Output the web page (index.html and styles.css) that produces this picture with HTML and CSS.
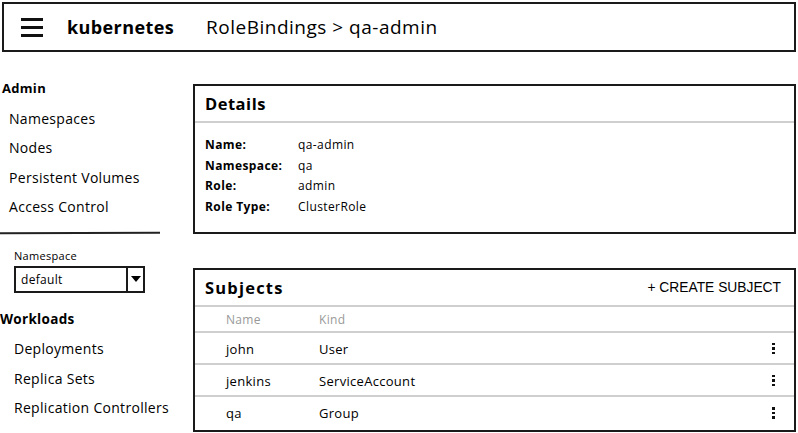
FILE: index.html
```html
<!DOCTYPE html>
<html>
<head>
<meta charset="utf-8">
<link rel="stylesheet" href="styles.css">
</head>
<body>
<header class="topbar">
  <span class="hamburger"><i></i><i></i><i></i></span>
  <span class="brand">kubernetes</span>
  <span class="crumb">RoleBindings &gt; qa-admin</span>
</header>
<div class="layout">
  <nav class="sidebar">
    <div class="group-title">Admin</div>
    <div class="nav-item">Namespaces</div>
    <div class="nav-item">Nodes</div>
    <div class="nav-item">Persistent Volumes</div>
    <div class="nav-item">Access Control</div>
    <div class="divider"></div>
    <div class="ns-label">Namespace</div>
    <div class="select">
      <span class="select-value">default</span>
      <span class="select-btn"><svg width="10" height="6" viewBox="0 0 10 6"><path d="M0 0 H10 L5 6 Z" fill="#000"/></svg></span>
    </div>
    <div class="group-title workloads">Workloads</div>
    <div class="nav-item wl">Deployments</div>
    <div class="nav-item wl">Replica Sets</div>
    <div class="nav-item wl">Replication Controllers</div>
  </nav>
  <main class="main">
    <section class="card details">
      <div class="card-head"><h2>Details</h2></div>
      <div class="detail-grid">
        <div class="dl">Name:</div><div class="dv">qa-admin</div>
        <div class="dl">Namespace:</div><div class="dv">qa</div>
        <div class="dl">Role:</div><div class="dv">admin</div>
        <div class="dl">Role Type:</div><div class="dv">ClusterRole</div>
      </div>
    </section>
    <section class="card subjects">
      <div class="card-head"><h2 class="wide">Subjects</h2><span class="create">+ CREATE SUBJECT</span></div>
      <div class="trow thead"><span class="c1">Name</span><span class="c2">Kind</span></div>
      <div class="trow"><span class="c1">john</span><span class="c2">User</span><span class="kebab"><i></i><i></i><i></i></span></div>
      <div class="trow"><span class="c1">jenkins</span><span class="c2">ServiceAccount</span><span class="kebab"><i></i><i></i><i></i></span></div>
      <div class="trow last"><span class="c1">qa</span><span class="c2">Group</span><span class="kebab"><i></i><i></i><i></i></span></div>
    </section>
  </main>
</div>
</body>
</html>
```
FILE: styles.css
```css
* { box-sizing: border-box; }
html, body { margin: 0; padding: 0; background: #fff; }
body {
  font-family: "Open Sans", "DejaVu Sans", sans-serif;
  color: #000;
  width: 798px;
  height: 433px;
  overflow: hidden;
  letter-spacing: 0.3px;
}
.topbar {
  margin: 2px 2px 0 2px;
  height: 50px;
  border: 2px solid #1a1a1a;
  display: flex;
  align-items: center;
  padding-left: 17px;
}
.hamburger {
  display: flex;
  flex-direction: column;
  gap: 5px;
  width: 22px;
}
.hamburger i {
  display: block;
  height: 3px;
  background: #111;
}
.brand {
  margin-left: 24px;
  font-weight: 700;
  font-size: 18px;
  letter-spacing: 0.4px;
}
.crumb {
  margin-left: 32px;
  font-size: 19px;
  letter-spacing: 0.5px;
}
.layout {
  display: flex;
}
.sidebar {
  width: 193px;
  padding-top: 22px;
}
.group-title {
  height: 29.5px;
  line-height: 29.5px;
  font-weight: 700;
  font-size: 13px;
  padding-left: 2px;
}
.nav-item {
  height: 29.5px;
  line-height: 29.5px;
  font-size: 14px;
  padding-left: 9px;
}
.nav-item.wl { padding-left: 14px; }
.divider {
  width: 160px;
  height: 2px;
  background: #222;
  margin-top: 10px;
  transform: rotate(-0.2deg);
}
.ns-label {
  font-size: 11px;
  line-height: 14px;
  margin-top: 15px;
  padding-left: 14px;
}
.select {
  margin: 3px 0 0 14px;
  width: 131px;
  height: 27px;
  border: 2px solid #1a1a1a;
  display: flex;
  align-items: center;
}
.select-value {
  flex: 1;
  font-size: 12px;
  padding-left: 5px;
}
.select-btn {
  width: 17px;
  height: 100%;
  border-left: 2px solid #1a1a1a;
  display: flex;
  align-items: center;
  justify-content: center;
}
.group-title.workloads {
  margin-top: 12px;
  padding-left: 0;
  font-size: 13.5px;
}
.main {
  width: 603px;
  padding-top: 32px;
}
.card {
  border: 2px solid #1a1a1a;
}
.details { height: 150px; }
.subjects { margin-top: 34px; height: 164px; }
.card-head {
  height: 37px;
  border-bottom: 2px solid #cfcfcf;
  display: flex;
  align-items: center;
  justify-content: space-between;
  padding: 0 13px 0 10px;
}
.card-head h2 {
  margin: 0;
  font-size: 16.5px;
  font-weight: 700;
  letter-spacing: 0.5px;
}
.card-head h2.wide { letter-spacing: 1.2px; }
.create {
  font-family: "Liberation Sans", Arial, sans-serif;
  font-size: 13.8px;
  letter-spacing: 0;
}
.detail-grid {
  display: grid;
  grid-template-columns: 93px 1fr;
  grid-auto-rows: 20.7px;
  align-items: center;
  padding: 11px 10px 0 10px;
  font-size: 12px;
  letter-spacing: 0.4px;
}
.dl { font-weight: 700; }
.trow {
  display: flex;
  align-items: center;
  height: 32px;
  border-bottom: 2px solid #cfcfcf;
  font-size: 13px;
  padding-left: 31px;
  padding-right: 19px;
  padding-top: 1px;
}
.trow.thead {
  height: 26px;
  color: #999;
  font-size: 12px;
}
.trow.last { border-bottom: none; height: 31px; }
.c1 { width: 93px; }
.c2 { flex: 1; }
.kebab {
  display: flex;
  flex-direction: column;
  gap: 2px;
  width: 3px;
}
.kebab i {
  display: block;
  width: 2.5px;
  height: 2.5px;
  background: #111;
}
```
